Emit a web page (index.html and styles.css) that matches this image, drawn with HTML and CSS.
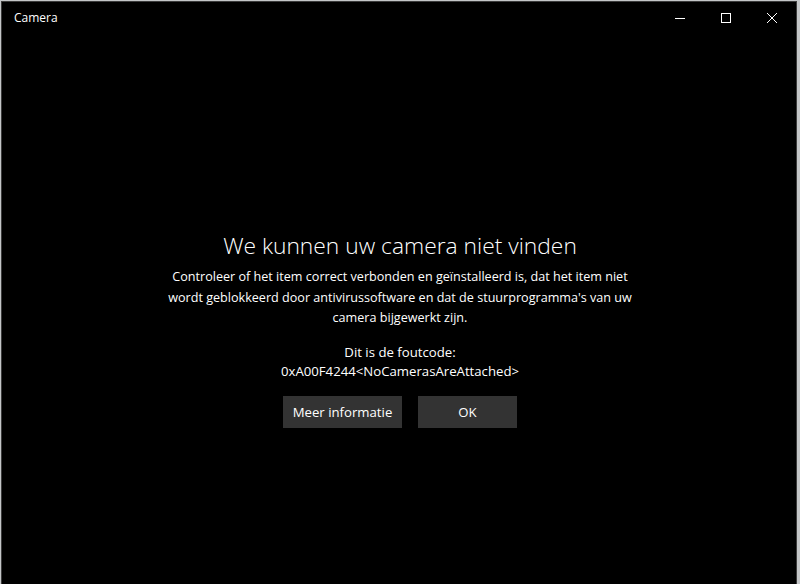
FILE: index.html
```html
<!DOCTYPE html>
<html>
<head>
<meta charset="utf-8">
<link rel="stylesheet" href="styles.css">
</head>
<body>
<div class="window">
  <div class="titlebar">
    <span class="app-title">Camera</span>
    <div class="controls">
      <div class="ctl"><svg width="10" height="10" viewBox="0 0 10 10"><path d="M0 5.5H10" stroke="#fff" stroke-width="1"/></svg></div>
      <div class="ctl"><svg width="10" height="10" viewBox="0 0 10 10"><rect x="0.5" y="0.5" width="9" height="9" fill="none" stroke="#fff" stroke-width="1"/></svg></div>
      <div class="ctl"><svg width="10" height="10" viewBox="0 0 10 10"><path d="M0 0L10 10M10 0L0 10" stroke="#fff" stroke-width="1"/></svg></div>
    </div>
  </div>
  <div class="content">
    <h1 class="heading">We kunnen uw camera niet vinden</h1>
    <p class="message">Controleer of het item correct verbonden en geïnstalleerd is, dat het item niet<br>wordt geblokkeerd door antivirussoftware en dat de stuurprogramma's van uw<br>camera bijgewerkt zijn.</p>
    <p class="code">Dit is de foutcode:<br>0xA00F4244&lt;NoCamerasAreAttached&gt;</p>
    <div class="buttons">
      <div class="btn btn-more">Meer informatie</div>
      <div class="btn btn-ok">OK</div>
    </div>
  </div>
</div>
</body>
</html>
```
FILE: styles.css
```css
html, body {
  margin: 0;
  padding: 0;
  height: 584px;
  overflow: hidden;
}
body {
  background: #c4c6c8;
  font-family: "Open Sans", "Noto Sans", sans-serif;
  color: #fff;
}
.window {
  margin-left: 1px;
  margin-top: 1px;
  width: 794px;
  height: 583px;
  background: #000;
  border: 1px solid #3c3c3c;
  border-bottom: none;
  display: flex;
  flex-direction: column;
}
.titlebar {
  height: 31px;
  display: flex;
  align-items: center;
  justify-content: space-between;
  flex-shrink: 0;
}
.app-title {
  font-size: 12px;
  margin-left: 12px;
  color: #fff;
}
.controls {
  display: flex;
  align-self: stretch;
  margin-right: 1px;
}
.ctl {
  width: 46px;
  display: flex;
  align-items: center;
  justify-content: center;
}
.content {
  display: flex;
  flex-direction: column;
  align-items: center;
  padding-top: 198px;
  padding-left: 2px;
}
.heading {
  margin: 0;
  font-weight: 300;
  font-size: 22.8px;
  line-height: 30px;
  text-align: center;
}
.message {
  margin: 6px 0 0 0;
  font-size: 12.6px;
  line-height: 20.5px;
  text-align: center;
}
.code {
  margin: 14px 0 0 0;
  font-size: 13.2px;
  line-height: 19px;
  text-align: center;
}
.buttons {
  display: flex;
  gap: 16px;
  margin-top: 15px;
}
.btn {
  height: 32px;
  background: #333333;
  display: flex;
  align-items: center;
  justify-content: center;
  font-size: 13.2px;
}
.btn-more { width: 119px; }
.btn-ok { width: 99px; }
```
